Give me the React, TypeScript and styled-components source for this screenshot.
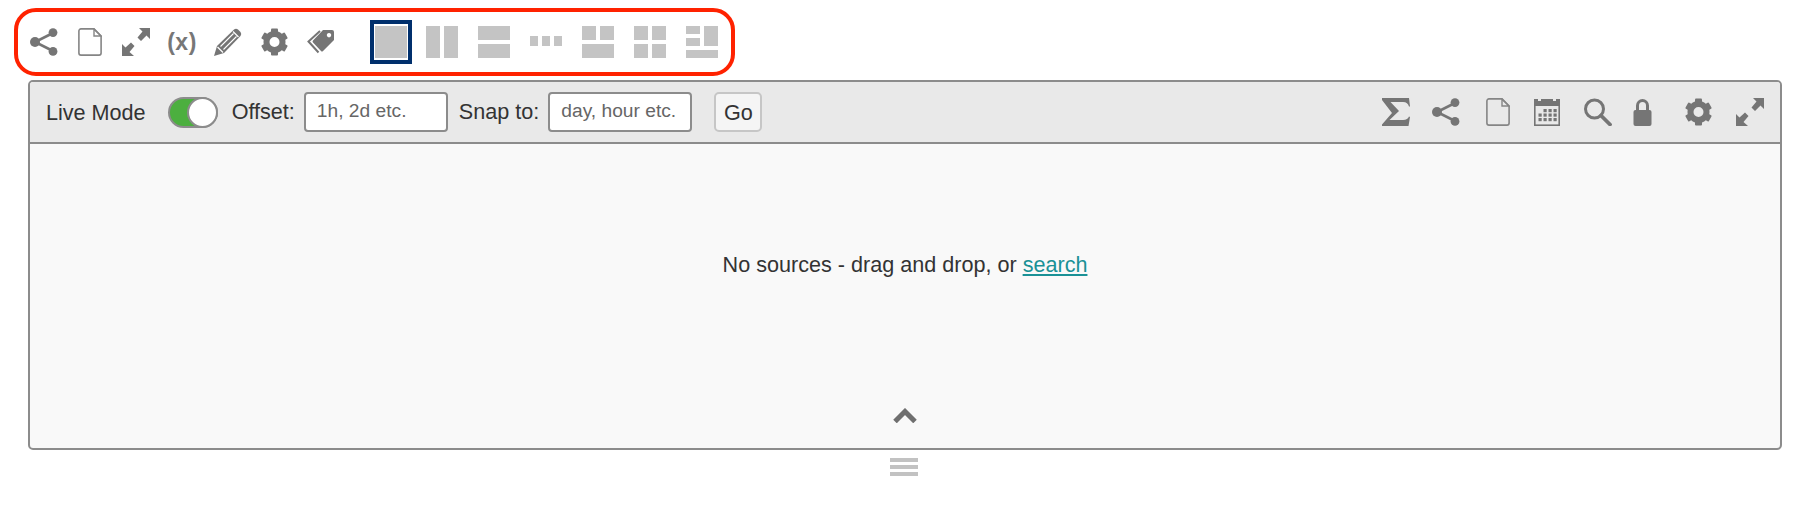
import React from "react";
import styled, { createGlobalStyle } from "styled-components";

const Global = createGlobalStyle`
  html, body { margin: 0; padding: 0; background: #fff; }
  body { font-family: "Liberation Sans", Arial, sans-serif; color: #333; }
`;

const Page = styled.div`
  width: 1812px;
  height: 510px;
  padding-top: 8px;
  box-sizing: border-box;
`;

const TopBar = styled.div`
  box-sizing: border-box;
  width: 721px;
  height: 68px;
  margin-left: 14px;
  border: 4px solid #ff2200;
  border-radius: 22px;
  display: flex;
  align-items: center;
  padding-left: 3px;
`;

const Slot = styled.div`
  width: 46px;
  height: 28px;
  display: flex;
  align-items: center;
  justify-content: center;
  flex: none;
`;

const Glyph = styled.svg<{ $w: number; $ml?: number }>`
  display: block;
  width: ${(p) => p.$w}px;
  height: 28px;
  flex: none;
  margin-left: ${(p) => p.$ml ?? 0}px;
  fill: #757575;
`;

const VarLabel = styled.span`
  font: bold 23px "Liberation Sans", sans-serif;
  color: #777;
  line-height: 28px;
  letter-spacing: 0.5px;
`;

const LayoutGroup = styled.div`
  display: flex;
  align-items: center;
  margin-left: 22px;
`;

const LayoutSlot = styled.div<{ $w: number }>`
  width: ${(p) => p.$w}px;
  display: flex;
  justify-content: center;
`;

const Selected = styled.div`
  box-sizing: border-box;
  width: 42px;
  height: 44px;
  margin-left: 1px;
  border: 4px solid #002f6c;
  display: flex;
  align-items: center;
  justify-content: center;
`;

const Tile = styled.svg`
  display: block;
  width: 32px;
  height: 32px;
  fill: #c4c4c4;
`;

const Panel = styled.div`
  box-sizing: border-box;
  width: 1754px;
  height: 370px;
  margin: 4px 0 0 28px;
  border: 2px solid #8c8c8c;
  border-radius: 5px;
  display: flex;
  flex-direction: column;
  background: #f9f9f9;
`;

const Toolbar = styled.div`
  box-sizing: border-box;
  height: 62px;
  flex: none;
  background: #e9e9e9;
  border-bottom: 2px solid #8c8c8c;
  border-radius: 3px 3px 0 0;
  display: flex;
  align-items: center;
  padding: 0 16px 0 16px;
  font-size: 21.6px;
  color: #333;
`;

const ModeLabel = styled.span`
  white-space: nowrap;
  padding-top: 2px;
`;

const Label = styled.span<{ $ml: number }>`
  margin-left: ${(p) => p.$ml}px;
  white-space: nowrap;
  padding-bottom: 1px;
`;

const Toggle = styled.div`
  box-sizing: border-box;
  position: relative;
  width: 50px;
  height: 31px;
  margin-left: 22px;
  background: #4caf3f;
  border: 2px solid #8c8c8c;
  border-radius: 16px;
  flex: none;
`;

const Thumb = styled.div`
  box-sizing: border-box;
  position: absolute;
  top: -2px;
  right: -2px;
  width: 31px;
  height: 31px;
  background: #fff;
  border: 2px solid #8c8c8c;
  border-radius: 50%;
`;

const Field = styled.input<{ $ml: number }>`
  box-sizing: border-box;
  width: 144px;
  height: 40px;
  margin: 0 0 0 ${(p) => p.$ml}px;
  padding: 0 0 2px 11px;
  border: 2px solid #8c8c8c;
  border-radius: 4px;
  background: #fff;
  font: 19.2px "Liberation Sans", sans-serif;
  outline: none;
  flex: none;
  &::placeholder { color: #666; opacity: 1; }
`;

const GoButton = styled.button`
  box-sizing: border-box;
  width: 48px;
  height: 40px;
  margin-left: 22px;
  padding: 2px 0 0;
  border: 2px solid #c6c6c6;
  border-radius: 5px;
  background: #f5f5f5;
  color: #333;
  font: 21.6px "Liberation Sans", sans-serif;
  flex: none;
`;

const RightIcons = styled.div`
  margin-left: auto;
  display: flex;
  align-items: center;
`;

const Body = styled.div`
  flex: 1;
  display: flex;
  flex-direction: column;
  align-items: center;
  padding: 105px 0 25px;
  font-size: 21.6px;
  line-height: 32px;
  color: #333;
`;

const SearchLink = styled.a`
  color: #1a9196;
  text-decoration: underline;
`;

const Collapse = styled.svg`
  display: block;
  width: 24px;
  height: 15px;
  margin-top: auto;
  fill: none;
  stroke: #6f6f6f;
  stroke-width: 5px;
`;

const Handle = styled.div`
  width: 28px;
  margin: 8px 0 0 890px;
  display: flex;
  flex-direction: column;
  gap: 3px;
`;

const HandleBar = styled.div`
  height: 4px;
  background: #c2c2c2;
`;

type IP = { ml?: number };

const ShareIcon = ({ ml }: IP) => (
  <Glyph $w={28} $ml={ml} viewBox="0 0 28 28">
    <path d="M23 5L5 14L23 23" fill="none" stroke="#757575" strokeWidth="2.6" />
    <circle cx="23" cy="4.6" r="4.4" />
    <circle cx="5" cy="14" r="5" />
    <circle cx="23" cy="23.4" r="4.4" />
  </Glyph>
);

const FileIcon = ({ ml }: IP) => (
  <Glyph $w={24} $ml={ml} viewBox="0 0 24 28">
    <path
      d="M3 .9H16L23.1 8V25a2.1 2.1 0 0 1-2.1 2.1H3A2.1 2.1 0 0 1 .9 25V3A2.1 2.1 0 0 1 3 .9Z"
      fill="none"
      stroke="#858585"
      strokeWidth="1.6"
    />
    <path d="M16 1V8H23Z" fill="none" stroke="#858585" strokeWidth="1.4" />
  </Glyph>
);

const ExpandIcon = ({ ml }: IP) => (
  <Glyph $w={28} $ml={ml} viewBox="0 0 28 28">
    <path d="M17 0H28V11L24.5 7.5L19 13L15.5 9.5L20.5 3.5Z" />
    <path d="M12 28H0V16L3.5 19.5L9 14.5L12.5 18L7.5 24Z" />
  </Glyph>
);

const PencilIcon = () => (
  <Glyph $w={28} viewBox="0 0 28 28">
    <path d="M0 28L3 18L20 1.5Q22 0 24 1.5L26.5 4Q28 6 26.5 8L10 25Z" />
    <path d="M6.5 18.5L19.5 5.5M9.5 21.5L22.5 8.5" stroke="#fff" strokeWidth="1.1" fill="none" />
    <path d="M19 3.5L24.5 9" stroke="#fff" strokeWidth="1.2" fill="none" />
    <path d="M3.5 19L9 24.5" stroke="#fff" strokeWidth="1.2" fill="none" />
  </Glyph>
);

const GearIcon = ({ ml }: IP) => (
  <Glyph $w={27} $ml={ml} viewBox="0 0 27 28">
    <circle cx="13.5" cy="14" r="8" fill="none" stroke="#757575" strokeWidth="6" />
    {[0, 60, 120, 180, 240, 300].map((a) => (
      <rect key={a} x="10" y="0.5" width="7" height="6" rx="1" transform={`rotate(${a} 13.5 14)`} />
    ))}
  </Glyph>
);

const TagIcon = () => (
  <Glyph $w={28} viewBox="0 0 28 28">
    <path
      fillRule="evenodd"
      d="M17 2H26Q28 2 28 4V12L17 23Q16 24 15 23L7 14.5Q6 13.5 7 12.5ZM23 5A2.2 2.2 0 1 0 23.01 5Z"
    />
    <path d="M14 3L2.5 13.5L12.5 24.5" fill="none" stroke="#757575" strokeWidth="2" />
  </Glyph>
);

const SigmaIcon = ({ ml }: IP) => (
  <Glyph $w={28} $ml={ml} viewBox="0 0 28 28">
    <path d="M0 0H27L28 8.5H27C26 5.5 24.5 4 21 4H8.5L17 13L7.5 22H21C24.5 22 26 20.5 27 18.5L28 19L26.5 28H0V26.5L10 15L0 2Z" />
  </Glyph>
);

const CalendarIcon = ({ ml }: IP) => {
  const cells: [number, number][] = [];
  [11, 15.5, 20].forEach((y, r) =>
    [3, 8, 13, 18].forEach((x, c) => {
      if (!(r === 0 && c === 0)) cells.push([x + 1.5, y]);
    })
  );
  return (
    <Glyph $w={26} $ml={ml} viewBox="0 0 26 28">
      <path d="M0 1H4V3H7V1H19V3H22V1H26V8H0Z" />
      <rect x="0.8" y="7" width="24.4" height="20.2" fill="none" stroke="#757575" strokeWidth="1.6" />
      {cells.map(([x, y]) => (
        <rect key={`${x}-${y}`} x={x} y={y} width="3.2" height="3.2" />
      ))}
    </Glyph>
  );
};

const SearchIcon = ({ ml }: IP) => (
  <Glyph $w={29} $ml={ml} viewBox="0 0 29 28">
    <circle cx="11.5" cy="11" r="9" fill="none" stroke="#757575" strokeWidth="3" />
    <path d="M18 17.5L27 26.5" fill="none" stroke="#757575" strokeWidth="3.8" strokeLinecap="round" />
  </Glyph>
);

const LockIcon = ({ ml }: IP) => (
  <Glyph $w={19} $ml={ml} viewBox="0 0 19 28">
    <path d="M4.5 13V7.5a5 5 0 0 1 10 0V13" fill="none" stroke="#757575" strokeWidth="3" />
    <rect x="0.5" y="12" width="18" height="16" rx="2" />
  </Glyph>
);

const layouts: number[][][] = [
  [[0, 0, 14, 32], [18, 0, 14, 32]],
  [[0, 0, 32, 14], [0, 18, 32, 14]],
  [[0, 10, 8, 10], [12, 10, 8, 10], [24, 10, 8, 10]],
  [[0, 0, 14, 14], [18, 0, 14, 14], [0, 18, 32, 14]],
  [[0, 0, 14, 14], [18, 0, 14, 14], [0, 18, 14, 14], [18, 18, 14, 14]],
  [[0, 0, 14, 8], [0, 12, 14, 8], [18, 0, 14, 20], [0, 24, 32, 8]],
];

const LayoutTile = ({ rects }: { rects: number[][] }) => (
  <Tile viewBox="0 0 32 32">
    {rects.map(([x, y, w, h]) => (
      <rect key={`${x}-${y}`} x={x} y={y} width={w} height={h} />
    ))}
  </Tile>
);

export default function App() {
  return (
    <Page>
      <Global />
      <TopBar>
        <Slot><ShareIcon /></Slot>
        <Slot><FileIcon /></Slot>
        <Slot><ExpandIcon /></Slot>
        <Slot><VarLabel>(x)</VarLabel></Slot>
        <Slot><PencilIcon /></Slot>
        <Slot><GearIcon /></Slot>
        <Slot><TagIcon /></Slot>
        <LayoutGroup>
          <LayoutSlot $w={51}>
            <Selected><LayoutTile rects={[[0, 0, 32, 32]]} /></Selected>
          </LayoutSlot>
          {layouts.map((rects, i) => (
            <LayoutSlot $w={52} key={i}><LayoutTile rects={rects} /></LayoutSlot>
          ))}
        </LayoutGroup>
      </TopBar>
      <Panel>
        <Toolbar>
          <ModeLabel>Live Mode</ModeLabel>
          <Toggle><Thumb /></Toggle>
          <Label $ml={14}>Offset:</Label>
          <Field $ml={9} placeholder="1h, 2d etc." />
          <Label $ml={11}>Snap to:</Label>
          <Field $ml={9} placeholder="day, hour etc." />
          <GoButton>Go</GoButton>
          <RightIcons>
            <SigmaIcon />
            <ShareIcon ml={22} />
            <FileIcon ml={26} />
            <CalendarIcon ml={24} />
            <SearchIcon ml={23} />
            <LockIcon ml={21} />
            <GearIcon ml={33} />
            <ExpandIcon ml={24} />
          </RightIcons>
        </Toolbar>
        <Body>
          <span>
            No sources - drag and drop, or <SearchLink href="#">search</SearchLink>
          </span>
          <Collapse viewBox="0 0 24 15">
            <path d="M2 13.5L12 3.5L22 13.5" />
          </Collapse>
        </Body>
      </Panel>
      <Handle>
        <HandleBar />
        <HandleBar />
        <HandleBar />
      </Handle>
    </Page>
  );
}
